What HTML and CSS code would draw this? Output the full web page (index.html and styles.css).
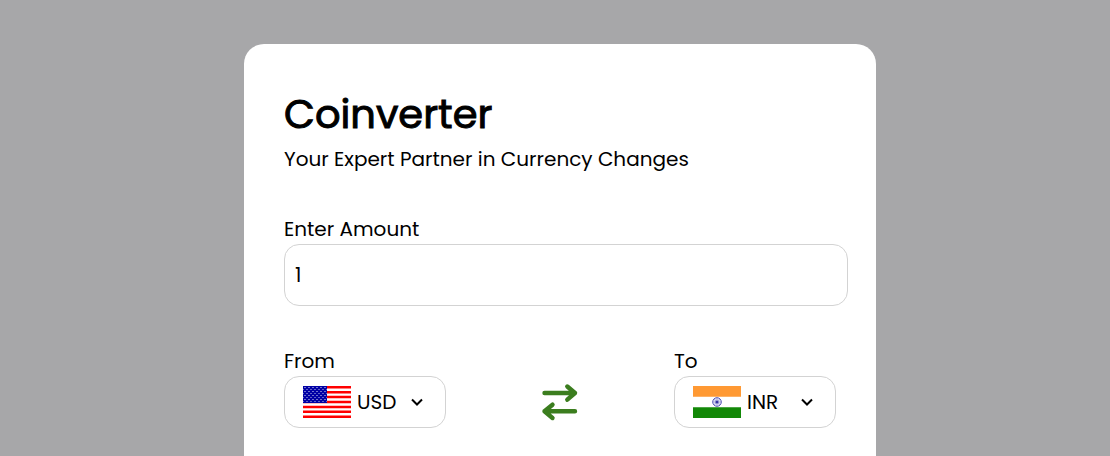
FILE: index.html
```html
<!DOCTYPE html>
<html lang="en">
<head>
<meta charset="utf-8">
<meta name="viewport" content="width=device-width, initial-scale=1">
<title>Coinverter</title>
<link rel="stylesheet" href="styles.css">
</head>
<body>
<main class="card">
  <header class="intro">
    <h1 class="title">Coinverter</h1>
    <p class="tagline">Your Expert Partner in Currency Changes</p>
  </header>
  <form class="form">
    <div class="field">
      <label class="label" for="amount">Enter Amount</label>
      <input class="amount" id="amount" type="text" inputmode="decimal" value="1">
    </div>
    <div class="pair">
      <div class="field">
        <label class="label" for="from">From</label>
        <div class="picker">
          <svg class="flag" viewBox="0 0 48 32" aria-hidden="true">
            <defs>
              <pattern id="stars" width="4" height="4" patternUnits="userSpaceOnUse">
                <circle cx="2" cy="1.5" r=".6" fill="#fff"/>
                <circle cx="4" cy="3.5" r=".5" fill="#fff"/>
                <circle cx="0" cy="3.5" r=".5" fill="#fff"/>
              </pattern>
            </defs>
            <path fill="#fff" d="M0 0h48v32H0z"/>
            <path stroke="#f00" stroke-width="2.46" d="M0 1.23h48M0 6.15h48M0 11.08h48M0 16h48M0 20.92h48M0 25.85h48M0 30.77h48"/>
            <path fill="#0000a5" d="M0 0h24v17H0z"/>
            <path fill="url(#stars)" d="M0 0h24v17H0z"/>
          </svg>
          <select class="select" id="from"><option>USD</option><option>INR</option></select>
          <svg class="chevron" viewBox="0 0 12 8" aria-hidden="true"><path d="M1 1.5l5 5 5-5"/></svg>
        </div>
      </div>
      <button class="swap" type="button" aria-label="Swap currencies">
        <svg class="swap-icon" viewBox="0 0 36 38" aria-hidden="true">
          <path stroke-width="4.4" d="M2.500 10h30.500M25.300 3.500l7.700 6.500-7.700 6.700M33 28.300H2.500M10.500 21.700l-8 6.600 8 6.700"/>
        </svg>
      </button>
      <div class="field">
        <label class="label" for="to">To</label>
        <div class="picker">
          <svg class="flag" viewBox="0 0 48 32" aria-hidden="true">
            <path fill="#fff" d="M0 0h48v32H0z"/>
            <path fill="#f93" d="M0 0h48v10.670H0z"/>
            <path fill="#128807" d="M0 21.330h48V32H0z"/>
            <circle cx="24" cy="16" r="4.300" fill="#dcdcf2" stroke="#5555b5" stroke-width="1"/>
            <path stroke="#8888cc" stroke-width=".5" d="M24 12v8M20 16h8M21.200 13.200l5.600 5.600M26.800 13.200l-5.600 5.600"/>
            <circle cx="24" cy="16" r="1.600" fill="#3535a5"/>
          </svg>
          <select class="select" id="to"><option>INR</option><option>USD</option></select>
          <svg class="chevron" viewBox="0 0 12 8" aria-hidden="true"><path d="M1 1.500l5 5 5-5"/></svg>
        </div>
      </div>
    </div>
  </form>
</main>
</body>
</html>
```
FILE: styles.css
```css
* { box-sizing: border-box; }

body {
  display: flex;
  justify-content: center;
  min-height: 100vh;
  margin: 0;
  padding: 44px 0 0 10px;
  background: #a7a7a9;
  color: #000;
  font: 400 20px/30px Poppins, Inter, sans-serif;
}

.card {
  width: 100%;
  max-width: 632px;
  padding: 40px 40px 28px;
  border-radius: 20px 20px 0 0;
  background: #fff;
}

.title {
  margin: 0;
  font-size: 40px;
  font-weight: 400;
  line-height: 60px;
  -webkit-text-stroke: 1px #000;
}

.tagline { margin: 0; }

.form {
  display: flex;
  flex-direction: column;
  gap: 40px;
  margin-top: 40px;
}

.field {
  display: flex;
  flex-direction: column;
}

.amount {
  width: calc(100% + 12px);
  height: 62px;
  padding: 0 10px;
  border: 1px solid #d3d3d3;
  border-radius: 15px;
  background: #fff;
  color: inherit;
  font: inherit;
}

.pair {
  display: flex;
  justify-content: space-between;
  align-items: flex-end;
}

.picker {
  display: grid;
  grid-template-columns: 48px 1fr 12px;
  align-items: center;
  width: 162px;
  height: 52px;
  padding: 0 22px 0 18px;
  border: 1px solid #d3d3d3;
  border-radius: 15px;
}

.flag {
  width: 48px;
  height: 32px;
}

.select {
  grid-area: 1 / 2 / 2 / 4;
  width: 100%;
  padding: 0 0 0 6px;
  border: 0;
  background: none;
  color: inherit;
  font: inherit;
  appearance: none;
}

.chevron {
  grid-area: 1 / 3;
  width: 12px;
  height: 8px;
  fill: none;
  stroke: #000;
  stroke-width: 2;
  pointer-events: none;
}

.swap {
  display: flex;
  align-items: center;
  height: 52px;
  padding: 0;
  border: 0;
  background: none;
}

.swap-icon {
  width: 36px;
  height: 38px;
  fill: none;
  stroke: #3b7d1e;
  stroke-linecap: round;
  stroke-linejoin: round;
  overflow: visible;
}
```
